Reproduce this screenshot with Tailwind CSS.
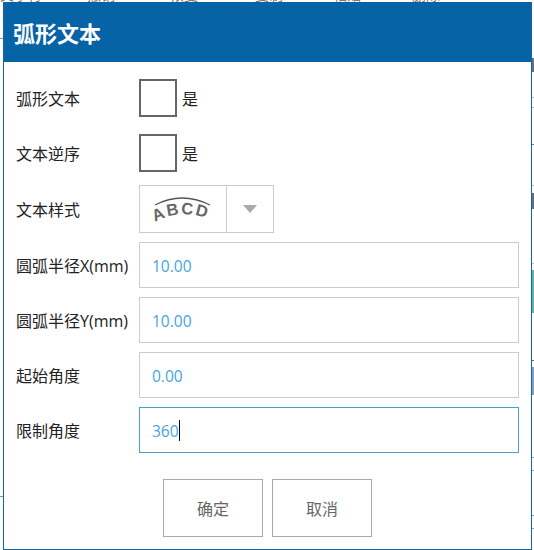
<!DOCTYPE html>
<html lang="zh-CN">
  <head>
    <meta charset="UTF-8" />
    <meta name="viewport" content="width=device-width, initial-scale=1.0" />
    <title>弧形文本</title>
    <script src="https://cdn.jsdelivr.net/npm/@tailwindcss/browser@4"></script>
  </head>
  <body class="relative w-[534px] h-[550px] overflow-hidden bg-white font-['Open_Sans','Noto_Sans_CJK_SC',sans-serif]">
    <!-- page behind the dialog, only its edges show -->
    <div class="absolute left-0 top-[-13px] flex text-[14px] leading-[16px] text-[#777] whitespace-nowrap">
      <span class="w-[87px]">文字符</span>
      <span class="w-[83px]">撤销</span>
      <span class="w-[85px]">恢复</span>
      <span class="w-[78px]">复制</span>
      <span class="w-[79px]">粘贴</span>
      <span>删除</span>
    </div>
    <div class="absolute left-0 top-[38px] w-[3px] h-px bg-[#6d9cc0]"></div>
    <div class="absolute left-0 top-[496px] w-[3px] h-px bg-[#6d9cc0]"></div>
    <div class="absolute right-0 top-[58px] w-[2px] h-[14px] bg-[#5d7183]"></div>
    <div class="absolute right-0 top-[97px] w-[2px] h-px bg-[#b9c6d0]"></div>
    <div class="absolute right-0 top-[107px] w-[2px] h-px bg-[#b9c6d0]"></div>
    <div class="absolute right-0 top-[144px] w-[2px] h-px bg-[#4f7fb0]"></div>
    <div class="absolute right-0 top-[185px] w-[2px] h-px bg-[#b9c6d0]"></div>
    <div class="absolute right-0 top-[193px] w-[2px] h-[16px] bg-[#5d7183]"></div>
    <div class="absolute right-0 top-[263px] w-[2px] h-px bg-[#b9c6d0]"></div>
    <div class="absolute right-0 top-[270px] w-[2px] h-[43px] bg-[#5fb3ad]"></div>
    <div class="absolute right-0 top-[360px] w-[2px] h-px bg-[#3f6ea3]"></div>
    <div class="absolute right-0 top-[367px] w-[2px] h-[28px] bg-[#7fa0bf]"></div>
    <div class="absolute right-0 top-[457px] w-[2px] h-px bg-[#7fa6c4]"></div>
    <div class="absolute right-0 top-[470px] w-[2px] h-px bg-[#7fa6c4]"></div>
    <div class="absolute right-0 top-[515px] w-[2px] h-px bg-[#7fa6c4]"></div>
    <div class="absolute right-0 top-[528px] w-[2px] h-px bg-[#7fa6c4]"></div>

    <div class="absolute left-[3px] top-[2px] w-[529px] h-[548px] border border-[#14669c] bg-white">
      <div class="h-[60px] -mt-px bg-[#0563a6] pl-[9px] pt-[2px] flex items-center text-[22px] font-bold text-white">弧形文本</div>

      <form class="flex flex-col gap-[9px] pt-[13px] pl-[12px] text-[16px] text-[#222]">
        <div class="flex items-center h-[46px]">
          <label class="w-[123px] pt-[2px]">弧形文本</label>
          <div class="size-[38px] border-2 border-[#666]"></div>
          <span class="ml-[5px] pt-[2px] text-[#222]">是</span>
        </div>
        <div class="flex items-center h-[46px]">
          <label class="w-[123px] pt-[2px]">文本逆序</label>
          <div class="size-[38px] border-2 border-[#666]"></div>
          <span class="ml-[5px] pt-[2px] text-[#222]">是</span>
        </div>
        <div class="flex items-center h-[48px]">
          <label class="w-[123px] pt-[2px]">文本样式</label>
          <div class="flex w-[135px] h-[48px] border border-[#ccc]">
            <div class="w-[87px] border-r border-[#ccc] flex items-center justify-center">
              <svg width="66" height="32" viewBox="0 0 66 32">
                <path d="M5 12 Q32 -2 60 12" fill="none" stroke="#555" stroke-width="1.3" />
                <path id="arc" d="M5 29 Q34 13 68 30" fill="none" />
                <text font-family="'Liberation Sans', sans-serif" font-size="16.5" font-weight="700" fill="#666" letter-spacing="1.8">
                  <textPath href="#arc">ABCD</textPath>
                </text>
              </svg>
            </div>
            <div class="flex-1 flex items-center justify-center">
              <div class="w-0 h-0 border-x-[7px] border-x-transparent border-t-[8px] border-t-[#aaa]"></div>
            </div>
          </div>
        </div>
        <div class="flex items-center h-[46px]">
          <label class="w-[123px] pt-[2px]">圆弧半径X(mm)</label>
          <div class="flex items-center w-[380px] h-[46px] border border-[#ccc] pl-[12px] pt-1 text-[15.5px] text-[#45a5e0]">10.00</div>
        </div>
        <div class="flex items-center h-[46px]">
          <label class="w-[123px] pt-[2px]">圆弧半径Y(mm)</label>
          <div class="flex items-center w-[380px] h-[46px] border border-[#ccc] pl-[12px] pt-1 text-[15.5px] text-[#45a5e0]">10.00</div>
        </div>
        <div class="flex items-center h-[46px]">
          <label class="w-[123px] pt-[2px]">起始角度</label>
          <div class="flex items-center w-[380px] h-[46px] border border-[#ccc] pl-[12px] pt-1 text-[15.5px] text-[#45a5e0]">0.00</div>
        </div>
        <div class="flex items-center h-[46px]">
          <label class="w-[123px] pt-[2px]">限制角度</label>
          <div class="flex items-center w-[380px] h-[46px] border border-[#4a9fc9] pl-[12px] pt-1 text-[15.5px] text-[#45a5e0]">
            360<span class="w-px h-[21px] -mt-1 bg-black"></span>
          </div>
        </div>
        <div class="flex gap-[9px] mt-[17px] ml-[147px]">
          <button type="button" class="w-[100px] h-[58px] border border-[#aaa] pt-[2px] text-[#666]">确定</button>
          <button type="button" class="w-[100px] h-[58px] border border-[#aaa] pt-[2px] text-[#666]">取消</button>
        </div>
      </form>
    </div>
  </body>
</html>
